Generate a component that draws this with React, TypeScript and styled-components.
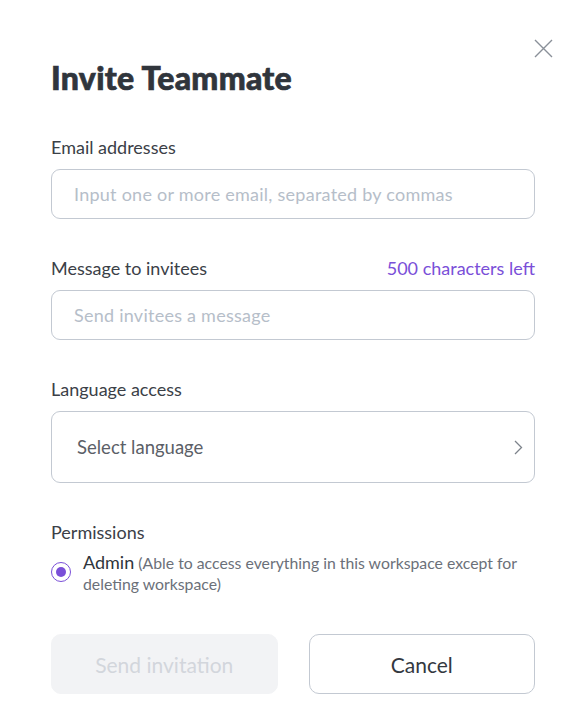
import React from "react";
import styled, { createGlobalStyle } from "styled-components";

const Global = createGlobalStyle`
  html, body { margin: 0; padding: 0; background: #ffffff; }
  body { font-family: Lato, "Noto Sans", sans-serif; -webkit-font-smoothing: antialiased; }
  * { box-sizing: border-box; }
`;

const Dialog = styled.div`
  position: relative;
  width: 582px;
  min-height: 715px;
  padding: 58px 47px 0 51px;
  background: #fff;
`;

const CloseButton = styled.button`
  position: absolute;
  top: 39px;
  right: 29px;
  width: 19px;
  height: 19px;
  padding: 0;
  border: none;
  background: transparent;
  cursor: pointer;
  display: flex;
`;

const Title = styled.h1`
  margin: 0;
  font-size: 32px;
  line-height: 40px;
  font-weight: 900;
  letter-spacing: 0.3px;
  -webkit-text-stroke: 0.7px #30353c;
  color: #30353c;
`;

const Form = styled.div`
  display: flex;
  flex-direction: column;
  gap: 41px;
  margin-top: 41px;
`;

const Field = styled.div`
  display: flex;
  flex-direction: column;
  gap: 14px;
`;

const LabelRow = styled.div`
  display: flex;
  justify-content: space-between;
  align-items: baseline;
`;

const Label = styled.label`
  font-size: 18px;
  line-height: 16px;
  color: #3b4047;
`;

const Counter = styled.span`
  font-size: 18px;
  line-height: 16px;
  color: #7a4fd8;
`;

const TextInput = styled.input`
  width: 100%;
  height: 50px;
  border: 1px solid #c3c9d2;
  border-radius: 9px;
  padding: 0 22px;
  font-family: Lato, "Noto Sans", sans-serif;
  font-size: 18px;
  letter-spacing: 0.25px;
  color: #333;
  outline: none;
  &::placeholder { color: #b6bec9; }
`;

const Select = styled.div`
  height: 72px;
  border: 1px solid #c3c9d2;
  border-radius: 9px;
  padding: 0 11px 0 25px;
  display: flex;
  align-items: center;
  justify-content: space-between;
  cursor: pointer;
`;

const SelectText = styled.span`
  font-size: 18.5px;
  color: #5b6067;
`;

const RadioRow = styled.div`
  display: flex;
  align-items: flex-start;
  gap: 12px;
  margin-top: -2px;
`;

const Radio = styled.span`
  flex: none;
  width: 20px;
  height: 20px;
  margin-top: 10px;
  border-radius: 50%;
  border: 1.5px solid #7a4fd8;
  display: flex;
  align-items: center;
  justify-content: center;
  &::after {
    content: "";
    width: 10px;
    height: 10px;
    border-radius: 50%;
    background: #7a4fd8;
  }
`;

const RadioText = styled.div`
  line-height: 21px;
  color: #6b7079;
  font-size: 15.8px;
`;

const RadioName = styled.span`
  font-size: 18px;
  color: #30353c;
`;

const Buttons = styled.div`
  display: grid;
  grid-template-columns: 1fr 1fr;
  gap: 31px;
  margin-top: -1px;
`;

const Button = styled.button<{ $variant: "primary" | "outline" }>`
  height: 60px;
  border-radius: 10px;
  font-family: Lato, "Noto Sans", sans-serif;
  font-size: 21px;
  border: 1px solid ${(p) => (p.$variant === "outline" ? "#c3c9d2" : "#f2f3f5")};
  background: ${(p) => (p.$variant === "outline" ? "#fff" : "#f2f3f5")};
  color: ${(p) => (p.$variant === "outline" ? "#33383f" : "#d2d6dc")};
  cursor: ${(p) => (p.$variant === "outline" ? "pointer" : "default")};
`;

export default function App() {
  return (
    <>
      <Global />
      <Dialog>
        <CloseButton aria-label="Close">
          <svg width="19" height="19" viewBox="0 0 19 19">
            <path d="M1 1L18 18M18 1L1 18" stroke="#8a9099" strokeWidth="1.4" fill="none" />
          </svg>
        </CloseButton>
        <Title>Invite Teammate</Title>
        <Form>
          <Field>
            <Label>Email addresses</Label>
            <TextInput placeholder="Input one or more email, separated by commas" />
          </Field>
          <Field>
            <LabelRow>
              <Label>Message to invitees</Label>
              <Counter>500 characters left</Counter>
            </LabelRow>
            <TextInput placeholder="Send invitees a message" />
          </Field>
          <Field>
            <Label>Language access</Label>
            <Select>
              <SelectText>Select language</SelectText>
              <svg width="10" height="15" viewBox="0 0 10 15">
                <path d="M2 1L8.5 7.5L2 14" stroke="#7d838b" strokeWidth="1.3" fill="none" />
              </svg>
            </Select>
          </Field>
          <Field>
            <Label>Permissions</Label>
            <RadioRow>
              <Radio />
              <RadioText>
                <RadioName>Admin</RadioName> (Able to access everything in this workspace except for
                deleting workspace)
              </RadioText>
            </RadioRow>
          </Field>
          <Buttons>
            <Button $variant="primary" disabled>Send invitation</Button>
            <Button $variant="outline">Cancel</Button>
          </Buttons>
        </Form>
      </Dialog>
    </>
  );
}
